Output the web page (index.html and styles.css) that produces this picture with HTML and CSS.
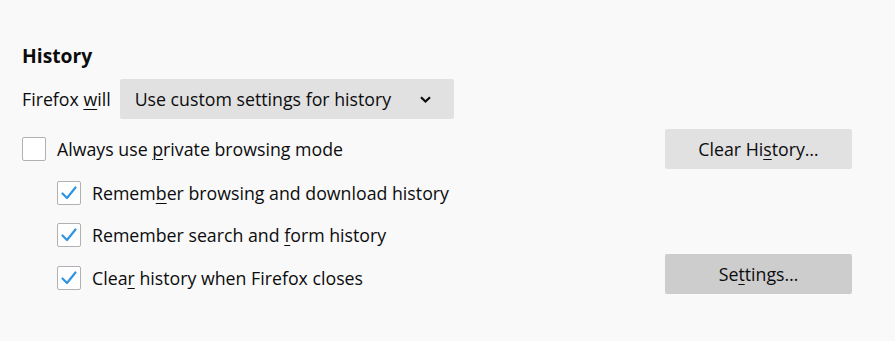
FILE: index.html
```html
<!DOCTYPE html>
<html>
<head>
<meta charset="utf-8">
<link rel="stylesheet" href="styles.css">
</head>
<body>
<div class="pane">
  <h2 class="title">History</h2>
  <div class="will-row">
    <span class="label">Firefox <u>w</u>ill</span>
    <div class="select">
      <span>Use custom settings for history</span>
      <svg class="chev" width="11" height="7" viewBox="0 0 11 7"><path d="M1 1.2 L5.5 5.5 L10 1.2" fill="none" stroke="#0c0c0d" stroke-width="2.2"/></svg>
    </div>
  </div>
  <div class="row first">
    <label class="check"><span class="box"></span><span>Always use <u>p</u>rivate browsing mode</span></label>
    <button class="btn">Clear Hi<u>s</u>tory…</button>
  </div>
  <div class="nested">
    <label class="check"><span class="box on"><svg width="24" height="24" viewBox="0 0 24 24"><path d="M5.5 12.5 L10 17 L18.5 6.5" fill="none" stroke="#2f94e2" stroke-width="2.2" stroke-linecap="round" stroke-linejoin="round"/></svg></span><span>Remem<u>b</u>er browsing and download history</span></label>
    <label class="check"><span class="box on"><svg width="24" height="24" viewBox="0 0 24 24"><path d="M5.5 12.5 L10 17 L18.5 6.5" fill="none" stroke="#2f94e2" stroke-width="2.2" stroke-linecap="round" stroke-linejoin="round"/></svg></span><span>Remember search and <u>f</u>orm history</span></label>
  </div>
  <div class="row last">
    <label class="check sub"><span class="box on"><svg width="24" height="24" viewBox="0 0 24 24"><path d="M5.5 12.5 L10 17 L18.5 6.5" fill="none" stroke="#2f94e2" stroke-width="2.2" stroke-linecap="round" stroke-linejoin="round"/></svg></span><span>Clea<u>r</u> history when Firefox closes</span></label>
    <button class="btn dark">Se<u>t</u>tings…</button>
  </div>
</div>
</body>
</html>
```
FILE: styles.css
```css
html, body {
  margin: 0;
  padding: 0;
  background: #f9f9fa;
}
body {
  font-family: "Open Sans", "Noto Sans", sans-serif;
  font-size: 17.75px;
  color: #0c0c0d;
}
u {
  text-underline-offset: 3px;
  text-decoration-thickness: 1px;
}
.pane {
  width: 830px;
  padding: 0 22px;
  display: flex;
  flex-direction: column;
}
.title {
  margin: 42px 0 0;
  font-size: 19.3px;
  font-weight: 700;
  line-height: 28px;
}
.will-row {
  margin-top: 9px;
  display: flex;
  align-items: center;
  gap: 9px;
  height: 40px;
}
.select {
  width: 334px;
  height: 40px;
  box-sizing: border-box;
  background: #e1e1e2;
  border-radius: 2px;
  display: flex;
  align-items: center;
  justify-content: space-between;
  padding: 0 23px 0 15px;
}
.row {
  display: flex;
  align-items: center;
  justify-content: space-between;
  height: 40px;
}
.row.first {
  margin-top: 10px;
}
.nested {
  margin-top: 12px;
  display: flex;
  flex-direction: column;
  gap: 18px;
  padding-left: 35px;
}
.row.last {
  margin-top: 7px;
}
.check {
  display: flex;
  align-items: center;
  gap: 11px;
  height: 24px;
}
.check.sub {
  margin-left: 35px;
  margin-top: 8px;
}
.box {
  width: 24px;
  height: 24px;
  box-sizing: border-box;
  border: 1px solid #b1b1b3;
  border-radius: 2px;
  background: #fff;
  position: relative;
  flex: none;
}
.box svg {
  position: absolute;
  left: -1px;
  top: -1px;
}
.btn {
  width: 187px;
  height: 40px;
  border: none;
  border-radius: 2px;
  background: #e1e1e2;
  font-family: inherit;
  font-size: 17.75px;
  color: #0c0c0d;
  padding: 0;
}
.btn.dark {
  background: #cdcdce;
}
```
